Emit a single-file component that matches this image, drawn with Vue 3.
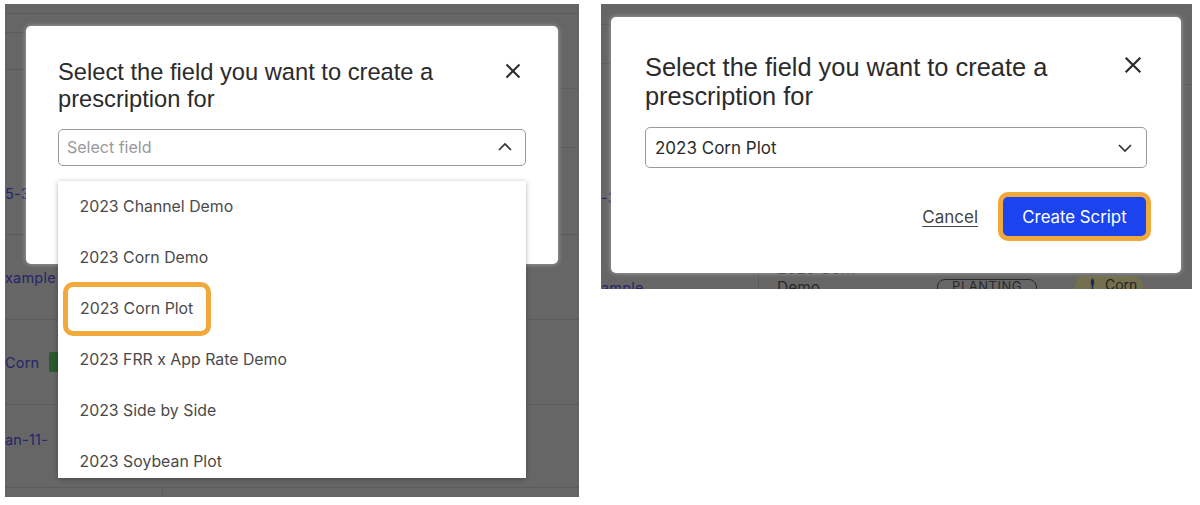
<script setup>
const fields = [
  '2023 Channel Demo',
  '2023 Corn Demo',
  '2023 Corn Plot',
  '2023 FRR x App Rate Demo',
  '2023 Side by Side',
  '2023 Soybean Plot'
]

// page rows behind the first dialog
const leftRows = [
  { h: 10, line: 'both' },
  { h: 19, line: 'start' },
  { h: 37, line: 'start' },
  { h: 19, line: 'end' },
  { h: 59, line: 'end' },
  { h: 87, line: 'both', text: '5-3', top: 37 },
  { h: 85, line: 'both', text: 'xample', top: 34 },
  { h: 85, line: 'both', text: 'Corn', top: 34, badge: true },
  { h: 83, line: 'both', text: 'an-11-', top: 26 }
]

const rightRows = [
  { h: 21, line: 'start' },
  { h: 39, line: 'start' },
  { h: 21, line: 'end' },
  { h: 100, line: 'none', text: '-3', top: 104 }
]
</script>

<template>
  <div class="page">
    <!-- Step 1: dropdown open -->
    <section class="shot shot-left">
      <div class="backdrop">
        <div v-for="(row, idx) in leftRows" :key="idx" class="row" :class="`line-${row.line}`" :style="{ height: `${row.h}px` }">
          <span v-if="row.text" class="bg-link" :style="{ marginTop: `${row.top}px` }">{{ row.text }}</span>
          <span v-if="row.badge" class="bg-badge"></span>
        </div>
        <div class="row-split"></div>
      </div>

      <div class="dialog dialog-left">
        <div class="dialog-head">
          <h2 class="title">Select the field you want to create a prescription for</h2>
          <svg class="close" viewBox="0 0 16 16"><path d="M1.500 1.500l13 13M14.500 1.500l-13 13" /></svg>
        </div>
        <div class="select select-open">
          <span class="placeholder">Select field</span>
          <svg class="chevron" viewBox="0 0 16 10"><path d="M2 8l6-6 6 6" /></svg>
        </div>
      </div>

      <ul class="menu">
        <li v-for="field in fields" :key="field" class="menu-item">
          <span :class="{ marked: field === '2023 Corn Plot' }">{{ field }}</span>
        </li>
      </ul>
    </section>

    <!-- Step 2: field picked -->
    <section class="shot shot-right">
      <div class="backdrop">
        <div v-for="(row, idx) in rightRows" :key="idx" class="row" :class="`line-${row.line}`" :style="{ height: `${row.h}px` }">
          <span v-if="row.text" class="bg-link" :style="{ marginTop: `${row.top}px` }">{{ row.text }}</span>
        </div>
        <div class="peek">
          <span class="peek-link"><span class="bg-link">ample</span></span>
          <div class="peek-cell">
            <span class="peek-name">2023 Corn<br />Demo</span>
            <span class="pill">PLANTING</span>
            <span class="crop">
              <svg viewBox="0 0 10 16"><path d="M5 0c2 2 2.500 5 2.500 7S6.500 11 6 11v5H4v-5c-.5 0-1.500-2-1.500-4S3 2 5 0z" /></svg>
              Corn
            </span>
          </div>
        </div>
      </div>

      <div class="dialog dialog-right">
        <div class="dialog-head">
          <h2 class="title">Select the field you want to create a prescription for</h2>
          <svg class="close" viewBox="0 0 16 16"><path d="M1.500 1.500l13 13M14.500 1.500l-13 13" /></svg>
        </div>
        <div class="select select-filled">
          <span class="value">2023 Corn Plot</span>
          <svg class="chevron" viewBox="0 0 16 10"><path d="M2 2l6 6 6-6" /></svg>
        </div>
        <div class="actions">
          <a class="cancel">Cancel</a>
          <button class="create">Create Script</button>
        </div>
      </div>
    </section>
  </div>
</template>

<style>
html,
body {
  margin: 0;
  background: #fff;
}
</style>

<style scoped>
.page {
  display: flex;
  align-items: flex-start;
  gap: 22px;
  width: 1200px;
  height: 505px;
  padding: 4px 8px 0 5px;
  box-sizing: border-box;
  overflow: hidden;
  font-family: Inter, "Liberation Sans", sans-serif;
}

.shot {
  position: relative;
  flex: none;
  overflow: hidden;
  background: #666;
}

.shot-left {
  width: 574px;
  height: 493px;
}

.shot-right {
  width: 591px;
  height: 285px;
}

.row {
  display: flex;
  align-items: flex-start;
  box-sizing: border-box;
}

.line-both {
  box-shadow: inset 0 -1px 0 #5b5b5b;
}

.line-start {
  background: linear-gradient(#5b5b5b, #5b5b5b) left bottom / 30px 1px no-repeat;
}

.line-end {
  background: linear-gradient(#5e5e5e, #5e5e5e) right bottom / 30px 1px no-repeat;
}

.bg-link {
  font-size: 14.500px;
  line-height: 18px;
  color: #25256a;
  letter-spacing: 0.2px;
}

.bg-badge {
  width: 14px;
  height: 20px;
  margin: 32px 0 0 10px;
  border-radius: 2px;
  background: #2a5a30;
}

.row-split {
  width: 158px;
  height: 9px;
  box-shadow: inset -1px 0 0 #5b5b5b;
}

.peek {
  display: flex;
  height: 104px;
}

.peek-link {
  flex: none;
  width: 158px;
  height: 104px;
  padding-top: 92px;
  box-sizing: border-box;
  box-shadow: inset -1px 0 0 #5b5b5b;
}

.peek-cell {
  display: flex;
  align-items: flex-start;
  padding: 0 0 0 18px;
}

.peek-name {
  width: 160px;
  margin-top: 74px;
  font-size: 15.500px;
  line-height: 19px;
  color: #2a2a2a;
}

.pill {
  box-sizing: border-box;
  width: 100px;
  height: 20px;
  margin-top: 94px;
  border: 1.500px solid #2a2a2a;
  border-radius: 8px;
  font-size: 13px;
  line-height: 12px;
  text-align: center;
  letter-spacing: 0.5px;
  color: #2a2a2a;
}

.crop {
  display: flex;
  flex: none;
  gap: 9px;
  align-items: flex-start;
  box-sizing: border-box;
  width: 68px;
  height: 22px;
  margin: 91px 0 0 38px;
  padding: 1px 0 0 14px;
  border-radius: 10px;
  background: #74704f;
  font-size: 14px;
  line-height: 16px;
  color: #222;
}

.crop svg {
  width: 7px;
  height: 13px;
  fill: #1b2a55;
}

.dialog {
  position: absolute;
  box-sizing: border-box;
  background: #fff;
  border-radius: 5px;
  box-shadow: 0 0 5px rgba(255, 255, 255, 0.45);
}

.dialog-left {
  left: 21px;
  top: 22px;
  width: 532px;
  height: 238px;
  padding: 33px 32px 0;
}

.dialog-right {
  left: 10px;
  top: 13px;
  width: 570px;
  height: 256px;
  padding: 36px 34px 0;
}

.dialog-head {
  display: flex;
  align-items: flex-start;
  justify-content: space-between;
  margin-bottom: 16px;
}

.title {
  width: 420px;
  margin: 0;
  font-family: "Liberation Sans", Arial, sans-serif;
  font-size: 23.700px;
  font-weight: 400;
  line-height: 27px;
  color: #2b2b2b;
}

.dialog-right .title {
  width: 450px;
  font-size: 25.400px;
  line-height: 29px;
}

.close {
  flex: none;
  width: 16px;
  height: 16px;
  margin: 4px 5px 0 0;
  fill: none;
  stroke: #2b2b2b;
  stroke-width: 2;
}

.dialog-right .close {
  width: 18px;
  height: 18px;
  margin: 3px 5px 0 0;
}

.select {
  display: flex;
  align-items: center;
  justify-content: space-between;
  box-sizing: border-box;
  background: #fff;
  border: 1px solid #9a9a9a;
  border-radius: 5px;
}

.select-open {
  height: 37px;
  padding: 0 12px 1px 8px;
}

.select-filled {
  height: 41px;
  padding: 1px 13px 0 9px;
}

.placeholder {
  font-size: 16px;
  color: #999;
}

.value {
  font-size: 17px;
  color: #2b2b2b;
}

.chevron {
  width: 16px;
  height: 10px;
  fill: none;
  stroke: #333;
  stroke-width: 1.700;
}

.actions {
  display: flex;
  align-items: center;
  justify-content: flex-end;
  gap: 25px;
  margin-top: 29px;
  margin-right: 1px;
}

.cancel {
  font-size: 17px;
  color: #444;
  text-decoration: underline;
  text-underline-offset: 3px;
}

.create {
  width: 143px;
  height: 39px;
  border: 0;
  border-radius: 5px;
  background: #1c44ee;
  box-shadow: 0 0 0 5px #f0a93a;
  font-family: inherit;
  font-size: 16.800px;
  color: #fff;
}

.menu {
  position: absolute;
  left: 53px;
  top: 177px;
  width: 468px;
  height: 297px;
  margin: 0;
  padding: 0;
  overflow: hidden;
  list-style: none;
  background: #fff;
  box-shadow: 0 1px 5px rgba(0, 0, 0, 0.3);
}

.menu-item {
  display: flex;
  align-items: center;
  height: 51px;
  padding-left: 21.500px;
  font-size: 15.850px;
  color: #4a4a4a;
}

.marked {
  margin-left: -16.500px;
  padding: 12px 13px 13px 12px;
  border: 5px solid #f0a93a;
  border-radius: 10px;
}
</style>
